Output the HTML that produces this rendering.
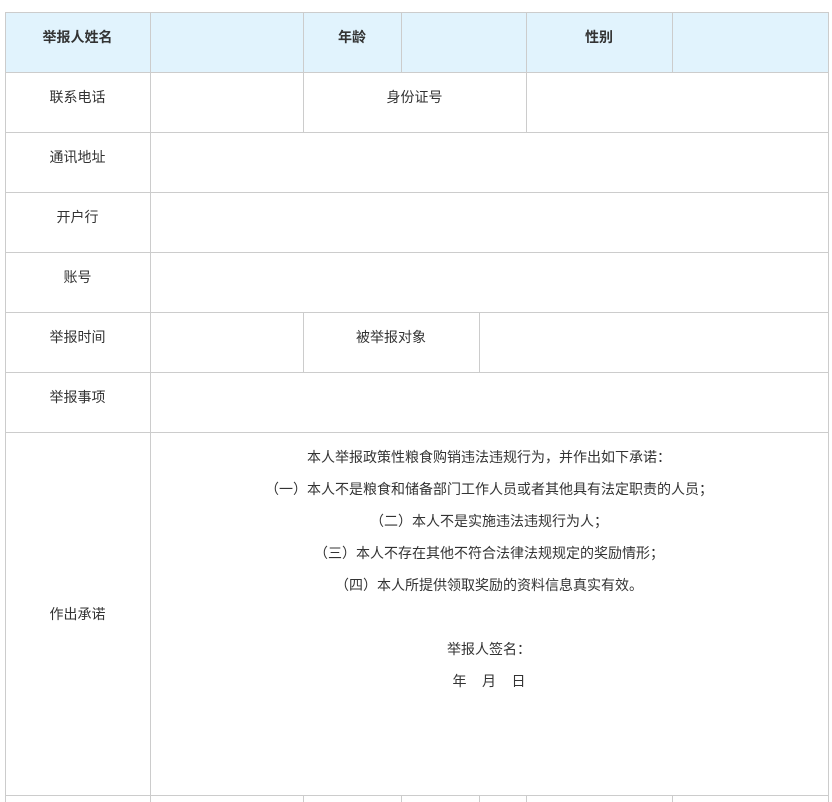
<!DOCTYPE html>
<html><head><meta charset="utf-8"><style>
body{margin:0;width:832px;height:802px;background:#fff;overflow:hidden;font-family:"Liberation Sans","Noto Sans CJK SC",sans-serif;color:#333;font-size:14px;position:relative}
.h{position:absolute;height:1px;background:#ccc}
.v{position:absolute;width:1px;background:#ccc}
.bg{position:absolute;background:#e1f3fd}
.t{position:absolute;text-align:center;line-height:20px;white-space:nowrap}
.b{font-weight:bold}
</style></head><body>
<div class="bg" style="left:5px;top:12px;width:823px;height:60px"></div>
<!-- horizontal lines -->
<div class="h" style="left:5px;top:12px;width:824px"></div>
<div class="h" style="left:5px;top:72px;width:824px"></div>
<div class="h" style="left:5px;top:132px;width:824px"></div>
<div class="h" style="left:5px;top:192px;width:824px"></div>
<div class="h" style="left:5px;top:252px;width:824px"></div>
<div class="h" style="left:5px;top:312px;width:824px"></div>
<div class="h" style="left:5px;top:372px;width:824px"></div>
<div class="h" style="left:5px;top:432px;width:824px"></div>
<div class="h" style="left:5px;top:795px;width:824px"></div>
<!-- verticals -->
<div class="v" style="left:5px;top:12px;height:790px"></div>
<div class="v" style="left:150px;top:12px;height:790px"></div>
<div class="v" style="left:828px;top:12px;height:790px"></div>
<div class="v" style="left:303px;top:12px;height:120px"></div>
<div class="v" style="left:401px;top:12px;height:60px"></div>
<div class="v" style="left:526px;top:12px;height:120px"></div>
<div class="v" style="left:672px;top:12px;height:60px"></div>
<div class="v" style="left:303px;top:312px;height:60px"></div>
<div class="v" style="left:479px;top:312px;height:60px"></div>
<div class="v" style="left:303px;top:795px;height:7px"></div>
<div class="v" style="left:401px;top:795px;height:7px"></div>
<div class="v" style="left:479px;top:795px;height:7px"></div>
<div class="v" style="left:526px;top:795px;height:7px"></div>
<div class="v" style="left:672px;top:795px;height:7px"></div>
<!-- texts -->
<div class="t b" style="left:5px;width:145px;top:27px">举报人姓名</div>
<div class="t b" style="left:303px;width:98px;top:27px">年龄</div>
<div class="t b" style="left:526px;width:146px;top:27px">性别</div>
<div class="t" style="left:5px;width:145px;top:87px">联系电话</div>
<div class="t" style="left:303px;width:223px;top:87px">身份证号</div>
<div class="t" style="left:5px;width:145px;top:147px">通讯地址</div>
<div class="t" style="left:5px;width:145px;top:207px">开户行</div>
<div class="t" style="left:5px;width:145px;top:267px">账号</div>
<div class="t" style="left:5px;width:145px;top:327px">举报时间</div>
<div class="t" style="left:303px;width:176px;top:327px">被举报对象</div>
<div class="t" style="left:5px;width:145px;top:387px">举报事项</div>
<div class="t" style="left:5px;width:145px;top:604px">作出承诺</div>
<div class="t" style="left:150px;width:678px;top:447px">本人举报政策性粮食购销违法违规行为，并作出如下承诺：</div>
<div class="t" style="left:150px;width:678px;top:479px">（一）本人不是粮食和储备部门工作人员或者其他具有法定职责的人员；</div>
<div class="t" style="left:150px;width:678px;top:511px">（二）本人不是实施违法违规行为人；</div>
<div class="t" style="left:150px;width:678px;top:543px">（三）本人不存在其他不符合法律法规规定的奖励情形；</div>
<div class="t" style="left:150px;width:678px;top:575px">（四）本人所提供领取奖励的资料信息真实有效。</div>
<div class="t" style="left:150px;width:678px;top:639px">举报人签名：</div>
<div class="t" style="left:150px;width:678px;top:671px">年&nbsp;&nbsp;&nbsp;&nbsp;月&nbsp;&nbsp;&nbsp;&nbsp;日</div>
</body></html>
